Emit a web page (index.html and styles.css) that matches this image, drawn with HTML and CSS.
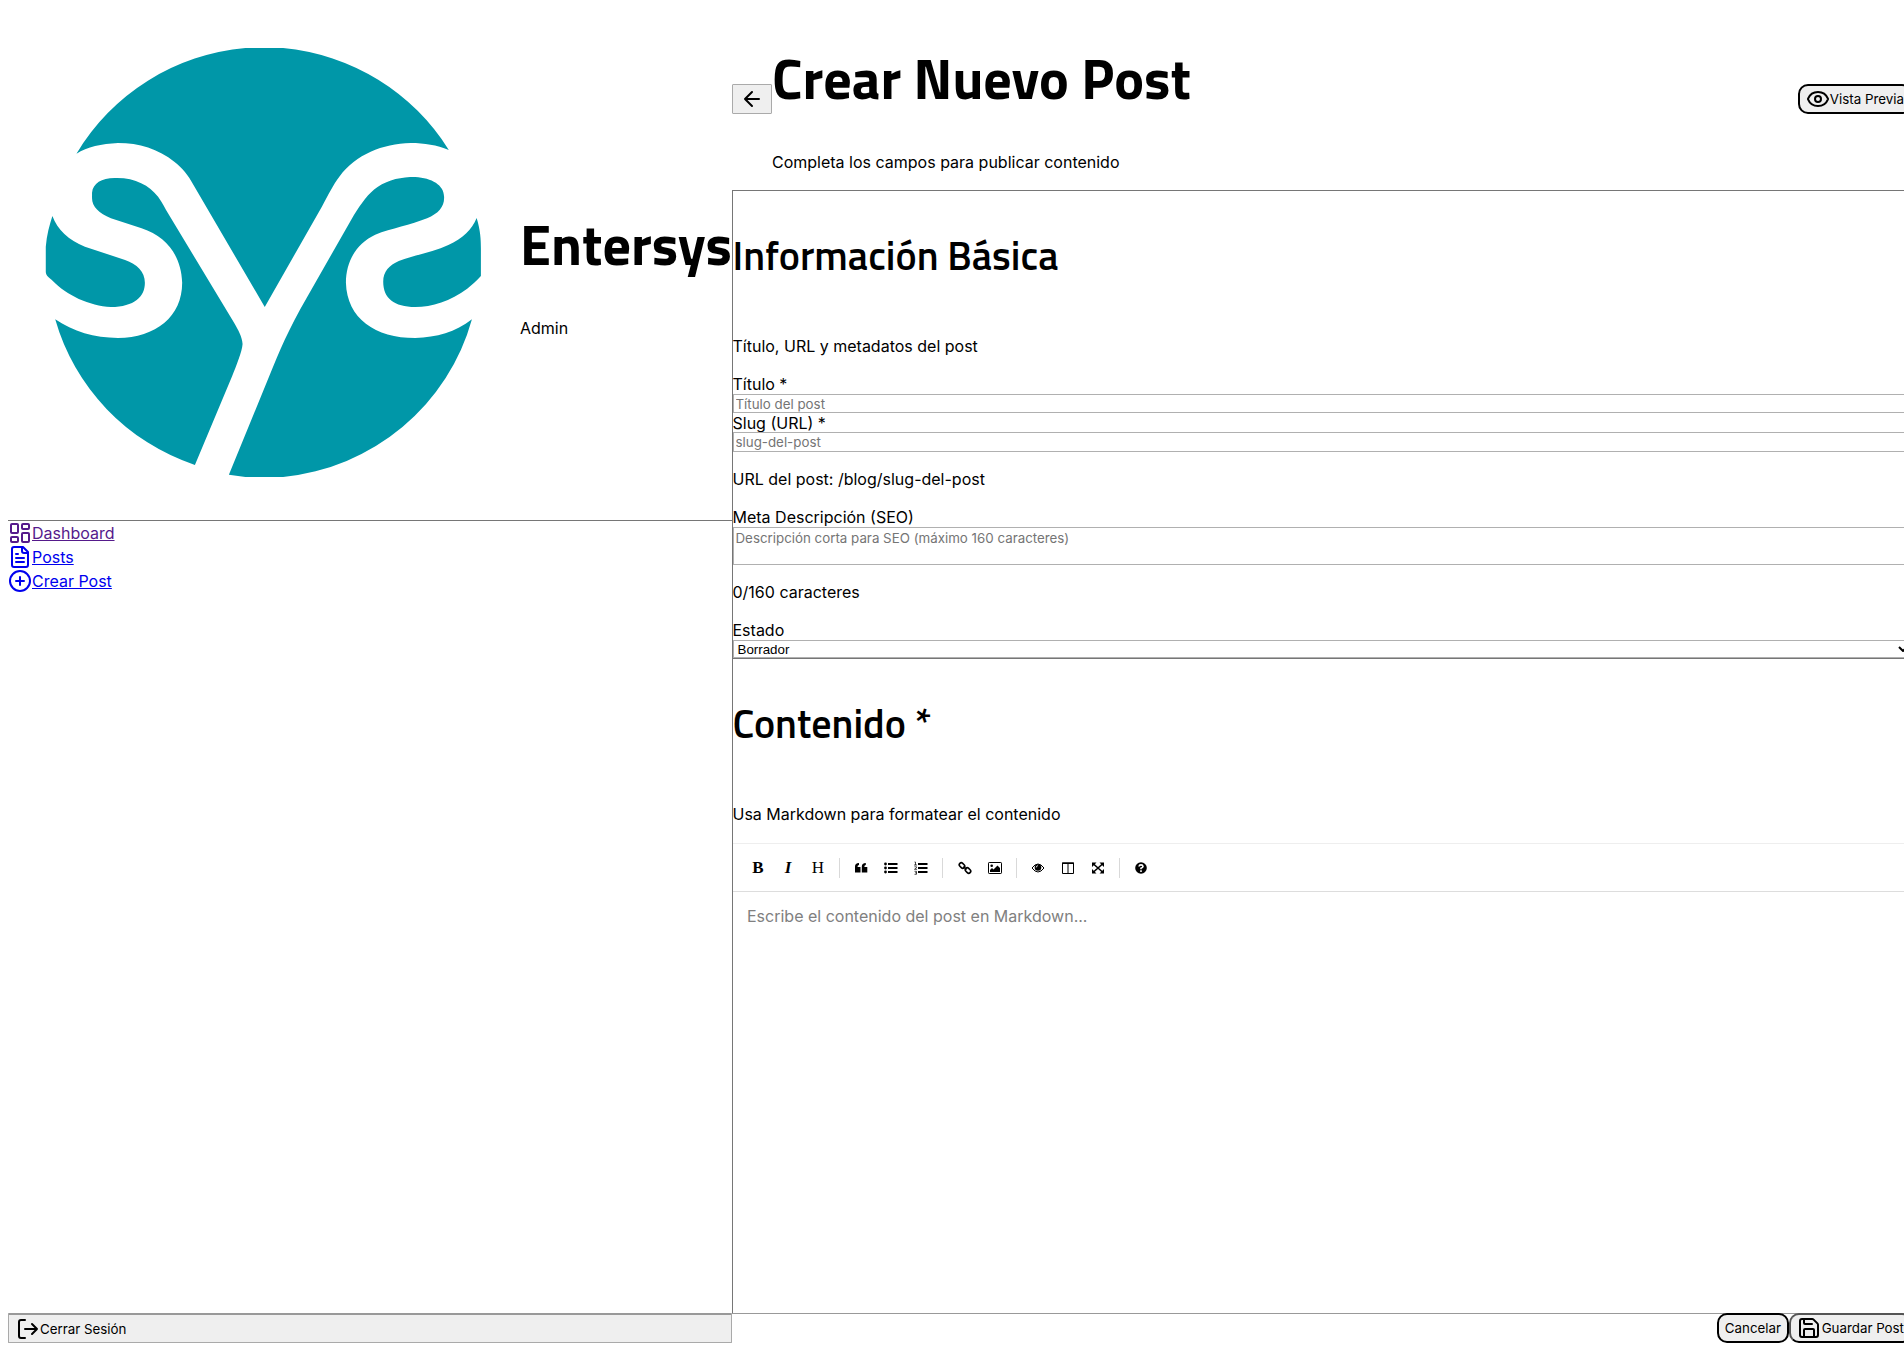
FILE: index.html
```html
<!DOCTYPE html>
<html lang="es">
<head>
<meta charset="utf-8">
<title>Crear Nuevo Post</title>
<link rel="stylesheet" href="styles.css">
</head>
<body>
<div class="app">
<aside class="sidebar">
  <div class="brand">
    <svg class="logo" viewBox="16.95 24 1084.9 1536" preserveAspectRatio="none" fill="#0097a8">
      <path d="M162 461A463 645 0 0 1 520 144H600A463 645 0 0 1 951 450C925 435 900 429 870 429C810 432 755 462 719 530C705 557 697 580 682 620L561 921L410 555C399 525 386 504 370 486C335 446 295 429 250 429C215 432 185 440 162 461Z"/>
      <path d="M195 578C197 550 215 534 243 534C285 532 315 555 335 590C345 610 350 625 356 640L496 968C505 990 513 1010 514 1032C513 1055 500 1100 492 1128L413 1395A463 645 0 0 1 117 958C155 995 200 1014 250 1014C330 1012 386 950 386 848C384 770 355 710 300 685L235 655C210 640 195 620 195 595Z"/>
      <path d="M111 648C122 690 145 720 180 740L265 780C290 792 307 815 307 848C307 890 285 920 235 921C190 918 140 885 112 843C105 832 97 828 97 815V740C99 705 105 675 111 648Z"/>
      <path d="M485 1424L573 1120C590 1060 612 985 650 893L750 645C766 610 780 580 800 561C825 538 850 531 880 531C915 534 941 555 941 590C942 620 930 640 905 655C870 675 830 685 795 704C755 730 733 785 733 848C735 955 795 1014 880 1014C925 1012 965 997 1000 958A463 645 0 0 1 600 1431H520Z"/>
      <path d="M1010 654C1018 690 1019 720 1019 745V828C1010 842 1000 855 990 866C955 903 915 921 880 921C835 920 812 895 812 845C812 815 825 795 845 783C880 765 920 755 950 735C980 715 1000 690 1010 654Z"/>
    </svg>
    <div class="brand-text"><h1 class="title brand-name">Entersys</h1><p class="line">Admin</p></div>
  </div>
  <nav class="nav">
    <a class="link visited" href="#"><svg class="icon" viewBox="0 0 24 24"><rect x="3" y="3" width="7" height="9" rx="1"/><rect x="14" y="3" width="7" height="5" rx="1"/><rect x="14" y="12" width="7" height="9" rx="1"/><rect x="3" y="16" width="7" height="5" rx="1"/></svg><span>Dashboard</span></a>
    <a class="link" href="#"><svg class="icon" viewBox="0 0 24 24"><path d="M15 2H6a2 2 0 0 0-2 2v16a2 2 0 0 0 2 2h12a2 2 0 0 0 2-2V7Z"/><path d="M14 2v4a2 2 0 0 0 2 2h4M10 9H8M16 13H8M16 17H8"/></svg><span>Posts</span></a>
    <a class="link" href="#"><svg class="icon" viewBox="0 0 24 24"><circle cx="12" cy="12" r="10"/><path d="M8 12h8M12 8v8"/></svg><span>Crear Post</span></a>
  </nav>
  <button class="btn logout"><svg class="icon" viewBox="0 0 24 24"><path d="M9 21H5a2 2 0 0 1-2-2V5a2 2 0 0 1 2-2h4M16 17l5-5-5-5M21 12H9"/></svg>Cerrar Sesión</button>
</aside>
<main class="main">
  <header class="head">
    <button class="btn back"><svg class="icon" viewBox="0 0 24 24"><path d="m12 19-7-7 7-7M19 12H5"/></svg></button>
    <div class="head-text"><h1 class="title page-name">Crear Nuevo Post</h1><p class="line">Completa los campos para publicar contenido</p></div>
    <button class="btn round preview"><svg class="icon" viewBox="0 0 24 24"><path d="M2.06 12.35a1 1 0 0 1 0-.7 10.75 10.75 0 0 1 19.88 0 1 1 0 0 1 0 .7 10.75 10.75 0 0 1-19.88 0"/><circle cx="12" cy="12" r="3"/></svg>Vista Previa</button>
  </header>
  <section class="card basic">
    <h3 class="title section-name">Información Básica</h3>
    <p class="line intro">Título, URL y metadatos del post</p>
    <label class="line">Título *</label>
    <input class="field first" placeholder="Título del post">
    <label class="line">Slug (URL) *</label>
    <input class="field slug" placeholder="slug-del-post">
    <p class="line hint">URL del post: /blog/slug-del-post</p>
    <label class="line">Meta Descripción (SEO)</label>
    <textarea class="field area" placeholder="Descripción corta para SEO (máximo 160 caracteres)"></textarea>
    <p class="line hint">0/160 caracteres</p>
    <label class="line">Estado</label>
    <div class="field select"><span>Borrador</span><svg class="chevron" viewBox="0 0 10 6"><path d="m1 1 4 4 4-4"/></svg></div>
  </section>
  <section class="card content">
    <h3 class="title section-name">Contenido *</h3>
    <p class="line usage">Usa Markdown para formatear el contenido</p>
    <div class="toolbar">
      <span class="tool bold">B</span><span class="tool italic">I</span><span class="tool">H</span><i class="sep"></i>
      <span class="tool"><svg class="glyph" viewBox="0 0 16 16"><path d="M2 8.5V6.500Q2 3 6 3V5Q4.500 5 4.500 7H7.500V12.500H2ZM8.800 8.500V6.500Q8.800 3 12.800 3V5Q11.300 5 11.300 7H14.300V12.500H8.800Z"/></svg></span>
      <span class="tool"><svg class="glyph" viewBox="0 0 16 16"><path d="M5 3h9.500v2H5zM5 7h9.500v2H5zM5 11h9.500v2H5z"/><circle cx="2.500" cy="4" r="1.400"/><circle cx="2.500" cy="8" r="1.400"/><circle cx="2.500" cy="12" r="1.400"/></svg></span>
      <span class="tool"><svg class="glyph" viewBox="0 0 16 16"><path d="M5 3h9.500v2H5zM5 7h9.500v2H5zM5 11h9.500v2H5z"/><path class="thin" d="M1.500 2h1v3M1 5h3M1.500 6.800h2v1L1.500 9.300h2.500M1.500 11.300h2v3h-2M2 12.800h1.500"/></svg></span><i class="sep"></i>
      <span class="tool"><svg class="glyph" viewBox="0 0 16 16"><g class="wire"><rect x="2" y="3.500" width="6" height="4" rx="2" transform="rotate(45 5 5.500)"/><rect x="8" y="8.500" width="6" height="4" rx="2" transform="rotate(45 11 10.500)"/><path d="m6.500 6.500 3 3"/></g></svg></span>
      <span class="tool"><svg class="glyph" viewBox="0 0 16 16"><rect class="wire-thin" x="1.500" y="2.500" width="13" height="11" rx=".7"/><circle cx="4.700" cy="5.700" r="1.300"/><path d="M3 12V10l2-2 1.500 1.500L10.500 5.500 13 8v4Z"/></svg></span><i class="sep"></i>
      <span class="tool"><svg class="glyph" viewBox="0 0 16 16"><path class="wire-thin" d="M2 8q6-8 12 0-6 8-12 0Z"/><circle cx="8" cy="7.500" r="3.300"/><path class="shine" d="M6.200 7.500q0-1.800 1.800-1.800"/></svg></span>
      <span class="tool"><svg class="glyph" viewBox="0 0 16 16"><path class="wire-thin" d="M2.500 3h11v10.500h-11ZM8 3v10.500"/><path d="M2 2.500h12v1.500H2z"/></svg></span>
      <span class="tool"><svg class="glyph" viewBox="0 0 16 16"><path d="M2 2.500h4.500L2 7ZM9.500 2.500H14V7ZM2 9v4.500h4.500ZM14 9v4.500H9.500Z"/><path class="wire2" d="m3.500 4 9 8M12.500 4l-9 8"/></svg></span><i class="sep"></i>
      <span class="tool"><svg class="glyph" viewBox="0 0 16 16"><circle cx="8" cy="8" r="5.800"/><path class="question" d="M6 6.500Q6.200 4.900 8 4.900t2 1.500Q10 7.300 8 8.300V9.300M8 10.300v1.600"/></svg></span>
    </div>
    <div class="editor">Escribe el contenido del post en Markdown...</div>
  </section>
  <footer class="actions">
    <button class="btn round">Cancelar</button>
    <button class="btn round save"><svg class="icon" viewBox="0 0 24 24"><path d="M15.200 3a2 2 0 0 1 1.400.6l3.800 3.800a2 2 0 0 1 .6 1.400V19a2 2 0 0 1-2 2H5a2 2 0 0 1-2-2V5a2 2 0 0 1 2-2Z"/><path d="M17 21v-7a1 1 0 0 0-1-1H8a1 1 0 0 0-1 1v7M7 3v4a1 1 0 0 0 1 1h7"/></svg>Guardar Post</button>
  </footer>
</main>
</div>
</body>
</html>
```
FILE: styles.css
```css
* { box-sizing: border-box; }
html, body { height: 1351px; overflow: hidden; }
body { margin: 0; padding: 8px; font: 16px/20px Inter, sans-serif; color: #000; background: #fff; }
p, h1, h3 { margin: 0; }
.app { display: flex; width: 1904px; height: 1335px; }
.sidebar { width: 724px; flex: none; display: flex; flex-direction: column; }
.main { width: 1180px; flex: none; display: flex; flex-direction: column; }
.title { font-family: "Titillium Web", "Noto Sans", sans-serif; font-weight: 700; white-space: nowrap; }
.line { display: block; height: 20px; flex: none; white-space: nowrap; }

.brand { display: flex; height: 513px; border-bottom: 1px solid #767676; }
.logo { width: 512px; height: 512px; flex: none; }
.brand-text { padding-top: 197px; }
.brand-name { font-size: 56px; line-height: 79px; height: 113px; }
.nav { display: flex; flex-direction: column; flex: 1; }
.link { display: flex; height: 24px; align-items: center; color: #0000ee; }
.link.visited { color: #551a8b; }
.icon { width: 24px; height: 24px; flex: none; fill: none; stroke: currentColor; stroke-width: 2; stroke-linecap: round; stroke-linejoin: round; }

.btn { display: flex; align-items: center; height: 30px; padding: 0 7px; border: 1px solid #aaa; border-radius: 1px; background: #efefef; color: #000; font: 13.333px Inter, sans-serif; white-space: nowrap; }
.round { border: 2px solid #000; border-radius: 10px; padding: 0 6px; }
.logout { width: 724px; border-top: 2px solid #999; }

.head { display: flex; height: 182px; }
.back { width: 40px; margin-top: 76px; }
.head-text { padding-top: 31px; }
.page-name { font-size: 56px; line-height: 79px; height: 113px; }
.preview { margin: 76px 0 0 auto; }

.card { display: flex; flex-direction: column; border: 1px solid #767676; border-bottom: 0; }
.card .line, .section-name { margin-left: -.5px; }
.basic { height: 468px; }
.section-name { font-size: 40px; line-height: 60px; font-weight: 600; height: 145px; padding-top: 35px; flex: none; }
.intro { margin-bottom: 18px; }
.field { display: block; width: 100%; height: 20px; flex: none; margin: 0; padding: 0 1.500px; border: 1px solid #b0b0b0; border-radius: 0; background: #fff; font: 13.333px Inter, sans-serif; }
.field::placeholder { color: #757575; }
.first { height: 19px; padding-top: 1px; }
.slug { margin-top: -1px; }
.hint { margin-top: 17px; margin-bottom: 18px; }
.area { height: 38px; resize: none; padding: 2px 1.500px; }
.select { display: flex; align-items: center; justify-content: space-between; height: 18px; padding: 0 2px 0 3.500px; font-family: "Liberation Sans", sans-serif; }
.chevron { width: 10px; height: 6px; fill: none; stroke: #000; stroke-width: 2; }

.content { height: 655px; }
.usage { margin-bottom: 19px; }
.toolbar { display: flex; align-items: center; height: 49px; padding: 0 10px; border-top: 1px solid #eee; border-bottom: 1px solid #ddd; flex: none; }
.tool { display: flex; width: 30px; height: 30px; align-items: center; justify-content: center; font: 17px "Liberation Serif", serif; }
.tool.bold { font-weight: 700; }
.tool.italic { font-style: italic; font-weight: 700; }
.sep { width: 1px; height: 20px; margin: 0 6.300px 0 6px; background: #d9d9d9; }
.glyph { width: 16px; height: 16px; fill: #000; }
.wire, .wire2 { fill: none; stroke: #000; stroke-width: 1.600; }
.wire-thin { fill: none; stroke: #000; stroke-width: 1; }
.thin { fill: none; stroke: #000; stroke-width: .7; }
.shine { fill: none; stroke: #fff; stroke-width: .8; }
.question { fill: none; stroke: #fff; stroke-width: 1.600; }
.editor { padding: 14px; color: #808080; }

.actions { display: flex; justify-content: flex-end; height: 30px; border-top: 1px solid #999; }
.actions .btn { height: 30px; flex: none; margin-top: -1px; }
.save { border-top-color: #555; border-left-color: #555; }
.save .icon { margin-right: .6px; }
```
